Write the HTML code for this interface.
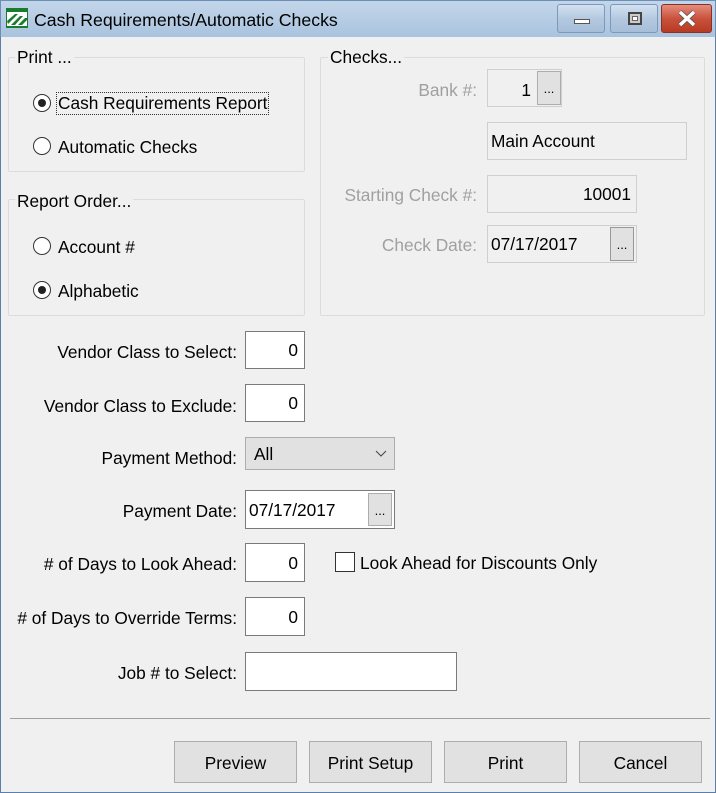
<!DOCTYPE html>
<html><head><style>
*{box-sizing:border-box;margin:0;padding:0}
body{width:716px;height:793px;overflow:hidden;background:#f0f0f0;font-family:"Liberation Sans",sans-serif;font-size:17.3px;color:#000;position:relative}
.a{position:absolute}
.win{left:0;top:0;width:716px;height:793px;border:1px solid #5a7fa8;border-top:none;background:#f0f0f0}
.tb{left:0;top:0;width:716px;height:37px;background:linear-gradient(#c3d6ea,#a9c3de);border:1px solid #6d8fb5;border-bottom:none}
.grp{border:1px solid #dcdcdc;border-radius:2px}
.gl{background:#f0f0f0;padding:0 2px;line-height:18px}
.lbl{text-align:right;line-height:22px}
.dis{color:#a0a0a0}
.box{border:1px solid #7a7a7a;background:#fff;text-align:right;padding-right:6px}
.dbox{border:1px solid #cfcfcf;background:#f0f0f0}
.btn{border:1px solid #adadad;background:#e1e1e1;text-align:center}
.rad{width:18px;height:18px;border:1px solid #333;border-radius:50%;background:#fff}
.rad.on::after{content:"";position:absolute;left:4px;top:4px;width:8px;height:8px;border-radius:50%;background:#222}
.wb{border:1px solid #7c98ba;border-radius:3px;background:linear-gradient(#d3e1ef,#b4c9e0 50%,#a6bed8)}
</style></head><body>
<div class="a win"></div>
<div class="a tb"></div>
<svg class="a" style="left:6px;top:8px" width="22" height="20" viewBox="0 0 22 20"><rect width="22" height="20" fill="#1a7a2e"/><rect x="1" y="4" width="20" height="14" fill="#fff"/><path d="M1 13 L9 6 L12 6 L2 16Z M5 17 L14 8 L17 8 L9 17Z M12 17 L19 10 L21 10 L21 12 L16 17Z" fill="#1a7a2e"/></svg>
<div class="a" style="left:34px;top:10px;font-size:17.7px">Cash Requirements/Automatic Checks</div>
<div class="a wb" style="left:557px;top:4px;width:48px;height:29px"><div class="a" style="left:16px;top:14px;width:16px;height:5px;background:#fff;border:1px solid #555"></div></div>
<div class="a wb" style="left:610px;top:4px;width:48px;height:29px"><div class="a" style="left:17px;top:7px;width:14px;height:13px;border:2px solid #444;background:#ccc"><div class="a" style="left:2px;top:2px;width:6px;height:5px;background:#fff;border:1px solid #666"></div></div></div>
<div class="a" style="left:661px;top:4px;width:51px;height:29px;border:1px solid #8a3126;border-radius:3px;background:linear-gradient(#e48e7e,#c9523c 50%,#b83a24)"></div>
<svg class="a" style="left:677px;top:10px" width="20" height="17" viewBox="0 0 20 17"><path d="M3 2 L17 15 M17 2 L3 15" stroke="#555" stroke-width="5"/><path d="M3 2 L17 15 M17 2 L3 15" stroke="#fff" stroke-width="3.5"/></svg>

<div class="a grp" style="left:8px;top:57px;width:297px;height:115px"></div>
<div class="a gl" style="left:15px;top:48px">Print ...</div>
<div class="a rad on" style="left:33px;top:94px"></div>
<div class="a" style="left:56px;top:92px;border:1px dotted #333;padding:0 1px;line-height:21px">Cash Requirements Report</div>
<div class="a rad" style="left:33px;top:137px"></div>
<div class="a" style="left:58px;top:136px;line-height:22px">Automatic Checks</div>

<div class="a grp" style="left:8px;top:199px;width:297px;height:117px"></div>
<div class="a gl" style="left:15px;top:192px">Report Order...</div>
<div class="a rad" style="left:33px;top:237px"></div>
<div class="a" style="left:58px;top:236px;line-height:22px">Account #</div>
<div class="a rad on" style="left:33px;top:281px"></div>
<div class="a" style="left:58px;top:280px;line-height:22px">Alphabetic</div>

<div class="a grp" style="left:320px;top:57px;width:385px;height:259px"></div>
<div class="a gl" style="left:328px;top:48px">Checks...</div>
<div class="a lbl dis" style="left:320px;top:79px;width:157px">Bank #:</div>
<div class="a dbox" style="left:487px;top:69px;width:75px;height:38px"></div>
<div class="a" style="left:487px;top:79px;width:44px;text-align:right;line-height:22px">1</div>
<div class="a btn" style="left:537px;top:71px;width:24px;height:34px;line-height:34px;font-size:13px">...</div>
<div class="a dbox" style="left:487px;top:122px;width:200px;height:38px;padding-left:3px;line-height:37px">Main Account</div>
<div class="a lbl dis" style="left:320px;top:184px;width:157px">Starting Check #:</div>
<div class="a dbox" style="left:487px;top:175px;width:150px;height:38px;text-align:right;padding-right:5px;line-height:37px">10001</div>
<div class="a lbl dis" style="left:320px;top:234px;width:157px">Check Date:</div>
<div class="a dbox" style="left:487px;top:225px;width:150px;height:38px;padding-left:3px;line-height:37px">07/17/2017</div>
<div class="a btn" style="left:610px;top:227px;width:24px;height:34px;line-height:34px;font-size:13px;border-color:#999">...</div>

<div class="a lbl" style="left:0;top:341px;width:237px">Vendor Class to Select:</div>
<div class="a box" style="left:245px;top:331px;width:60px;height:38px;line-height:37px">0</div>
<div class="a lbl" style="left:0;top:395px;width:237px">Vendor Class to Exclude:</div>
<div class="a box" style="left:245px;top:384px;width:60px;height:38px;line-height:37px">0</div>
<div class="a lbl" style="left:0;top:447px;width:237px">Payment Method:</div>
<div class="a" style="left:245px;top:437px;width:150px;height:33px;border:1px solid #adadad;background:#e1e1e1;padding-left:8px;line-height:32px">All</div>
<svg class="a" style="left:375px;top:450px" width="12" height="8"><path d="M1 1 L6 6 L11 1" stroke="#444" fill="none"/></svg>
<div class="a lbl" style="left:0;top:500px;width:237px">Payment Date:</div>
<div class="a box" style="left:245px;top:490px;width:150px;height:39px;text-align:left;padding-left:3px;line-height:38px">07/17/2017</div>
<div class="a btn" style="left:368px;top:493px;width:24px;height:33px;line-height:33px;font-size:13px">...</div>
<div class="a lbl" style="left:0;top:553px;width:237px">#&nbsp;of Days to Look Ahead:</div>
<div class="a box" style="left:245px;top:543px;width:60px;height:39px;line-height:38px">0</div>
<div class="a" style="left:335px;top:552px;width:20px;height:20px;border:1px solid #333;background:#fff"></div>
<div class="a" style="left:360px;top:552px;line-height:22px">Look Ahead for Discounts Only</div>
<div class="a lbl" style="left:0;top:607px;width:237px">#&nbsp;of Days to Override Terms:</div>
<div class="a box" style="left:245px;top:597px;width:60px;height:39px;line-height:38px">0</div>
<div class="a lbl" style="left:0;top:662px;width:237px">Job # to Select:</div>
<div class="a box" style="left:245px;top:652px;width:212px;height:39px"></div>

<div class="a" style="left:10px;top:718px;width:700px;height:1px;background:#a0a0a0"></div>
<div class="a btn" style="left:174px;top:741px;width:123px;height:42px;line-height:42px">Preview</div>
<div class="a btn" style="left:309px;top:741px;width:123px;height:42px;line-height:42px">Print Setup</div>
<div class="a btn" style="left:444px;top:741px;width:123px;height:42px;line-height:42px">Print</div>
<div class="a btn" style="left:579px;top:741px;width:123px;height:42px;line-height:42px">Cancel</div>
</body></html>
